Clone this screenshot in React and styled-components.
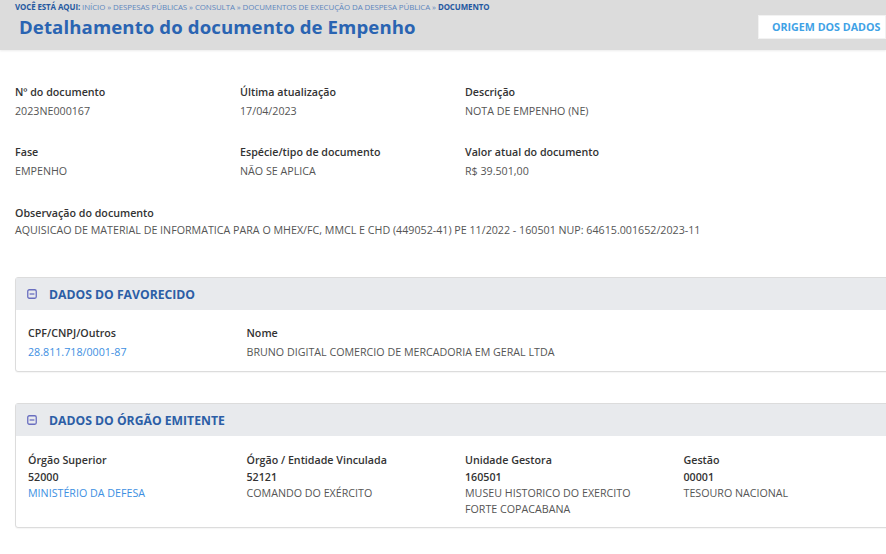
import React from "react";
import styled, { createGlobalStyle } from "styled-components";

const GlobalStyle = createGlobalStyle`
  body {
    margin: 0;
    background: #fff;
    font-family: "Open Sans", "Liberation Sans", sans-serif;
    overflow: hidden;
  }
`;

const Page = styled.div`
  width: 886px;
  height: 554px;
  overflow: hidden;
`;

const Header = styled.header`
  background: #dcdcdc;
  height: 50px;
  box-shadow: 0 1px 2px rgba(0, 0, 0, 0.08);
  display: flex;
  justify-content: space-between;
  align-items: flex-start;
  padding: 0 0 0 15px;
`;

const HeaderText = styled.div`
  padding-top: 2px;
`;

const Breadcrumb = styled.div`
  font-size: 7.9px;
  line-height: 10px;
  color: #5c86bd;
  white-space: nowrap;
  letter-spacing: -0.08px;

  b {
    color: #2458a0;
    font-weight: 700;
  }
`;

const Title = styled.h1`
  margin: 2px 0 0 4px;
  font-size: 18.6px;
  line-height: 26px;
  font-weight: 700;
  color: #2a64b2;
  letter-spacing: 0.1px;
`;

const SourceButton = styled.button`
  margin-top: 15px;
  background: #fff;
  border: 1px solid #f2f2f2;
  height: 24px;
  padding: 0 13px;
  width: 128px;
  font-family: inherit;
  font-size: 10.7px;
  font-weight: 700;
  color: #3fa2e6;
  white-space: nowrap;
  text-align: left;
`;

const Content = styled.main`
  padding: 34px 0 0 15px;
`;

const Grid = styled.div`
  display: grid;
  grid-template-columns: repeat(${(p) => p.$cols}, ${(p) => p.$col}px);
  row-gap: ${(p) => p.$gap || 0}px;
`;

const Field = styled.div`
  display: flex;
  flex-direction: column;

  & > div:nth-child(2) {
    margin-top: ${(p) => p.$gap || 0}px;
  }
`;

const Label = styled.div`
  font-size: 10.7px;
  line-height: 17px;
  font-weight: 600;
  color: #333;
`;

const Value = styled.div`
  font-size: 10.7px;
  line-height: 16px;
  color: ${(p) => (p.$link ? "#3d8fe2" : p.$strong ? "#333" : "#555")};
  font-weight: ${(p) => (p.$strong ? 600 : 400)};
  white-space: nowrap;
`;

const Observation = styled.div`
  margin-top: 26px;
`;

const Card = styled.section`
  margin-top: ${(p) => p.$top}px;
  width: 900px;
  border: 1px solid #dcdcdc;
  border-radius: 3px;
  box-shadow: 0 1px 1px rgba(0, 0, 0, 0.04);
  background: #fff;
`;

const CardHeader = styled.div`
  background: #e8eaed;
  height: 32px;
  display: flex;
  align-items: center;
  gap: 12px;
  padding-left: 11px;
`;

const CardTitle = styled.h2`
  margin: 0;
  font-size: 12.2px;
  font-weight: 700;
  color: #2c5ea6;
`;

const CardBody = styled.div`
  padding: ${(p) => p.$top}px 12px ${(p) => p.$bottom}px;
`;

function CollapseIcon() {
  return (
    <svg width="10" height="10" viewBox="0 0 10 10">
      <rect x="0.75" y="0.75" width="8.5" height="8.5" rx="1.5" fill="none" stroke="#6a6fc0" strokeWidth="1.3" />
      <line x1="2.6" y1="5" x2="7.4" y2="5" stroke="#6a6fc0" strokeWidth="1.3" />
    </svg>
  );
}

export default function App() {
  return (
    <Page>
      <GlobalStyle />
      <Header>
        <HeaderText>
          <Breadcrumb>
            <b>VOCÊ ESTÁ AQUI:</b> INÍCIO » DESPESAS PÚBLICAS » CONSULTA » DOCUMENTOS DE EXECUÇÃO DA DESPESA PÚBLICA » <b>DOCUMENTO</b>
          </Breadcrumb>
          <Title>Detalhamento do documento de Empenho</Title>
        </HeaderText>
        <SourceButton>ORIGEM DOS DADOS</SourceButton>
      </Header>

      <Content>
        <Grid $cols={3} $col={225} $gap={25}>
          <Field $gap={2}>
            <Label>Nº do documento</Label>
            <Value>2023NE000167</Value>
          </Field>
          <Field $gap={2}>
            <Label>Última atualização</Label>
            <Value>17/04/2023</Value>
          </Field>
          <Field $gap={2}>
            <Label>Descrição</Label>
            <Value>NOTA DE EMPENHO (NE)</Value>
          </Field>
          <Field $gap={2}>
            <Label>Fase</Label>
            <Value>EMPENHO</Value>
          </Field>
          <Field $gap={2}>
            <Label>Espécie/tipo de documento</Label>
            <Value>NÃO SE APLICA</Value>
          </Field>
          <Field $gap={2}>
            <Label>Valor atual do documento</Label>
            <Value>R$ 39.501,00</Value>
          </Field>
        </Grid>

        <Observation>
          <Label>Observação do documento</Label>
          <Value>
            AQUISICAO DE MATERIAL DE INFORMATICA PARA O MHEX/FC, MMCL E CHD (449052-41) PE 11/2022 - 160501 NUP: 64615.001652/2023-11
          </Value>
        </Observation>

        <Card $top={39}>
          <CardHeader>
            <CollapseIcon />
            <CardTitle>DADOS DO FAVORECIDO</CardTitle>
          </CardHeader>
          <CardBody $top={15} $bottom={11}>
            <Grid $cols={2} $col={218.5}>
              <Field $gap={2}>
                <Label>CPF/CNPJ/Outros</Label>
                <Value $link>28.811.718/0001-87</Value>
              </Field>
              <Field $gap={2}>
                <Label>Nome</Label>
                <Value>BRUNO DIGITAL COMERCIO DE MERCADORIA EM GERAL LTDA</Value>
              </Field>
            </Grid>
          </CardBody>
        </Card>

        <Card $top={31}>
          <CardHeader>
            <CollapseIcon />
            <CardTitle>DADOS DO ÓRGÃO EMITENTE</CardTitle>
          </CardHeader>
          <CardBody $top={16} $bottom={10}>
            <Grid $cols={4} $col={218.5}>
              <Field>
                <Label>Órgão Superior</Label>
                <Value $strong>52000</Value>
                <Value $link>MINISTÉRIO DA DEFESA</Value>
              </Field>
              <Field>
                <Label>Órgão / Entidade Vinculada</Label>
                <Value $strong>52121</Value>
                <Value>COMANDO DO EXÉRCITO</Value>
              </Field>
              <Field>
                <Label>Unidade Gestora</Label>
                <Value $strong>160501</Value>
                <Value>MUSEU HISTORICO DO EXERCITO</Value>
                <Value>FORTE COPACABANA</Value>
              </Field>
              <Field>
                <Label>Gestão</Label>
                <Value $strong>00001</Value>
                <Value>TESOURO NACIONAL</Value>
              </Field>
            </Grid>
          </CardBody>
        </Card>
      </Content>
    </Page>
  );
}
